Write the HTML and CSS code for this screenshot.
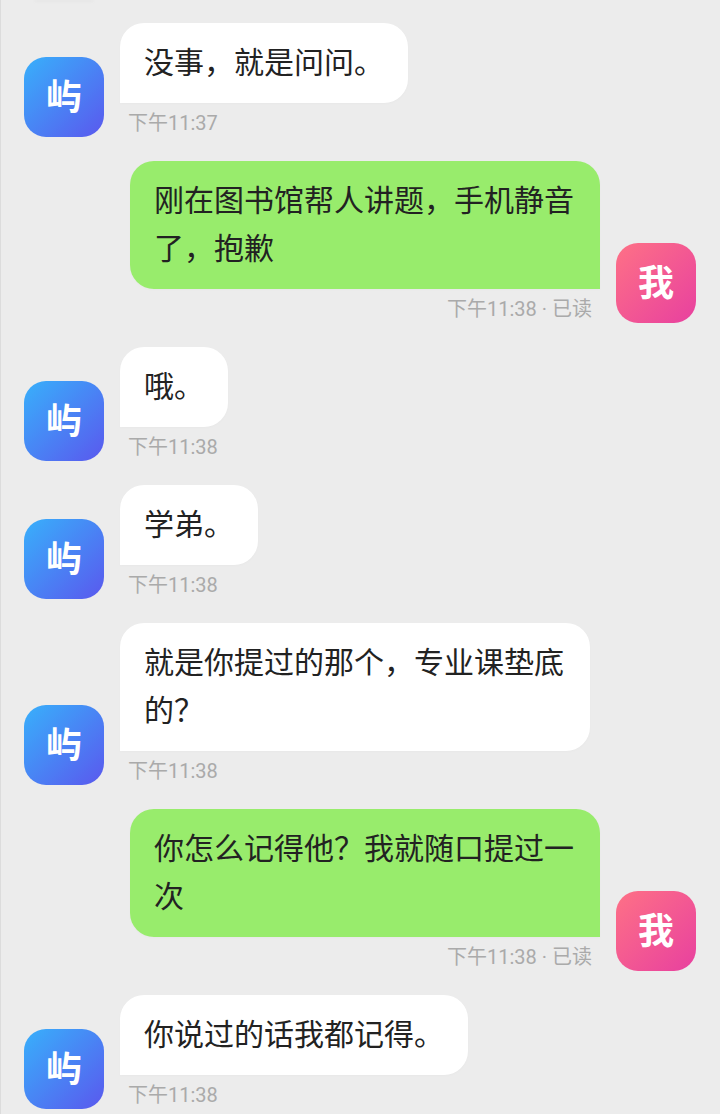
FILE: index.html
```html
<!DOCTYPE html>
<html lang="zh-CN">
<head>
    <meta charset="UTF-8">
    <meta name="viewport" content="width=device-width, initial-scale=1.0">
    <title>聊天记录</title>
    <link rel="stylesheet" href="styles.css">
</head>
<body>

<div class="chat">
    <div class="scroll-edge"></div>

    <div class="row">
        <div class="avatar them">屿</div>
        <div class="msg">
            <div class="bubble">没事，就是问问。</div>
            <div class="meta">下午11:37</div>
        </div>
    </div>

    <div class="row me">
        <div class="msg">
            <div class="bubble">刚在图书馆帮人讲题，手机静音了，抱歉</div>
            <div class="meta">下午11:38 · 已读</div>
        </div>
        <div class="avatar mine">我</div>
    </div>

    <div class="row">
        <div class="avatar them">屿</div>
        <div class="msg">
            <div class="bubble">哦。</div>
            <div class="meta">下午11:38</div>
        </div>
    </div>

    <div class="row">
        <div class="avatar them">屿</div>
        <div class="msg">
            <div class="bubble">学弟。</div>
            <div class="meta">下午11:38</div>
        </div>
    </div>

    <div class="row">
        <div class="avatar them">屿</div>
        <div class="msg">
            <div class="bubble">就是你提过的那个，专业课垫底的？</div>
            <div class="meta">下午11:38</div>
        </div>
    </div>

    <div class="row me">
        <div class="msg">
            <div class="bubble">你怎么记得他？我就随口提过一次</div>
            <div class="meta">下午11:38 · 已读</div>
        </div>
        <div class="avatar mine">我</div>
    </div>

    <div class="row">
        <div class="avatar them">屿</div>
        <div class="msg">
            <div class="bubble">你说过的话我都记得。</div>
            <div class="meta">下午11:38</div>
        </div>
    </div>
</div>

</body>
</html>
```

FILE: styles.css
```css
html, body {
    margin: 0;
    height: 100%;
    overflow: hidden;
}
body {
    font-family: "Noto Sans CJK SC", sans-serif;
    background-color: #ececec;
    color: #222222;
}
.chat {
    height: 1114px;
    box-sizing: border-box;
    border-left: 1px solid #dcdcdc;
    padding: 0 24px 0 23px;
    display: flex;
    flex-direction: column;
    gap: 24px;
    overflow: hidden;
}
/* bottom edge of the message that has scrolled off the top */
.scroll-edge {
    width: 58px;
    height: 2px;
    margin: 0 0 -3px 11px;
    background-color: #e6e6e6;
    filter: blur(1px);
}
.row {
    display: flex;
    align-items: flex-end;
    gap: 16px;
}
.row.me {
    justify-content: flex-end;
}
.avatar {
    flex: none;
    width: 80px;
    height: 80px;
    box-sizing: border-box;
    padding-bottom: 6px;
    border-radius: 22px;
    color: #ffffff;
    font-size: 36px;
    font-weight: 700;
    display: flex;
    align-items: center;
    justify-content: center;
}
.avatar.them {
    background: linear-gradient(135deg, #38b0fb, #5a58ee);
}
.avatar.mine {
    background: linear-gradient(135deg, #fe7186, #e8409f);
}
.msg {
    max-width: 470px;
    display: flex;
    flex-direction: column;
    align-items: flex-start;
}
.row.me .msg {
    align-items: flex-end;
}
.bubble {
    padding: 13px 24px 19px;
    background-color: #ffffff;
    border-radius: 24px 24px 24px 0;
    font-size: 30px;
    line-height: 48px;
    box-shadow: 0 1px 3px rgba(0,0,0,0.02);
}
.row.me .bubble {
    background-color: #98ec6c;
    border-radius: 24px 24px 0 24px;
}
.meta {
    height: 34px;
    padding: 0 8px;
    font-family: Roboto, "Noto Sans CJK SC", sans-serif;
    font-size: 20px;
    line-height: 40px;
    color: #aaaaaa;
}
```
